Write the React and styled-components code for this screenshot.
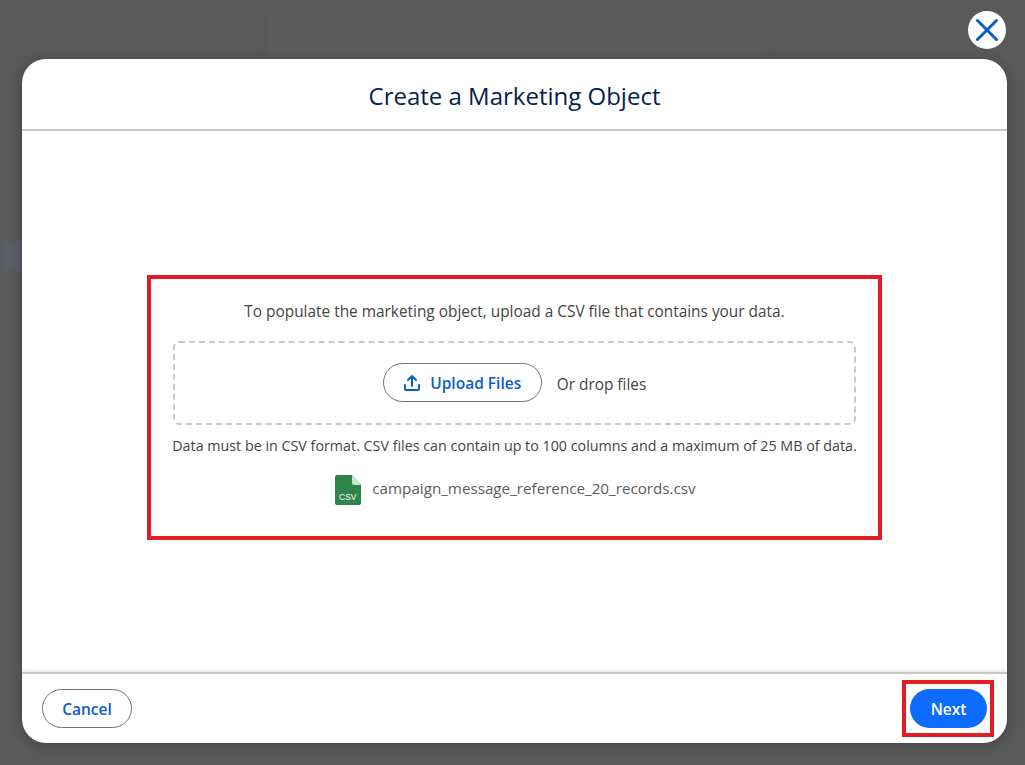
import styled, { createGlobalStyle } from "styled-components";

const GlobalStyle = createGlobalStyle`
  html, body {
    margin: 0;
    padding: 0;
    height: 100%;
    overflow: hidden;
    background: #595959;
    font-family: "Open Sans", "Noto Sans", sans-serif;
  }
`;

const Backdrop = styled.div`
  position: relative;
  width: 1025px;
  height: 765px;
  box-sizing: border-box;
  padding: 59px 18px 22px 22px;
  background: #595959;
`;

// faint traces of the page behind the overlay
const GhostSearch = styled.div`
  position: absolute;
  top: 16px;
  left: 268px;
  width: 500px;
  height: 44px;
  background: #5b5b5b;
  filter: blur(2px);
`;

const GhostNavItem = styled.div`
  position: absolute;
  top: 240px;
  left: 0;
  width: 22px;
  height: 32px;
  background: #5a5e66;
  filter: blur(2px);
`;

const CloseButton = styled.button`
  position: absolute;
  top: 11px;
  right: 19px;
  width: 38px;
  height: 38px;
  padding: 0;
  border: none;
  border-radius: 50%;
  background: #fff;
  display: flex;
  align-items: center;
  justify-content: center;
`;

const Modal = styled.div`
  position: relative;
  height: 100%;
  display: flex;
  flex-direction: column;
  background: #fff;
  border-radius: 24px;
  box-shadow: 0 2px 12px rgba(0, 0, 0, 0.25);
  overflow: hidden;
`;

const Header = styled.header`
  height: 72px;
  flex: none;
  box-sizing: border-box;
  padding-top: 2px;
  display: flex;
  align-items: center;
  justify-content: center;
  border-bottom: 2px solid #c9c9c9;
`;

const Title = styled.h1`
  margin: 0;
  font-size: 24px;
  font-weight: 400;
  color: #03234d;
`;

const Body = styled.main`
  flex: 1;
  display: flex;
  align-items: center;
  justify-content: center;
`;

const Highlight = styled.div`
  box-sizing: border-box;
  border: 4px solid #e31b23;
`;

const UploadPanel = styled(Highlight)`
  width: 735px;
  height: 265px;
  margin-top: 11px;
  padding: 23px 22px 0;
  display: flex;
  flex-direction: column;
  align-items: center;
`;

const Hint = styled.p`
  margin: 0;
  font-size: ${(p) => p.$size}px;
  line-height: 20px;
  color: #444;
  white-space: nowrap;
`;

const DropZone = styled.div`
  box-sizing: border-box;
  width: 683px;
  height: 84px;
  margin: 19px 0 11px;
  display: flex;
  align-items: center;
  justify-content: center;
  gap: 15px;
  border: 2px dashed #c9c9c9;
  border-radius: 6px;
`;

const PillButton = styled.button`
  box-sizing: border-box;
  height: 39px;
  border-radius: 20px;
  border: 1px solid #747474;
  background: #fff;
  color: #0b5cce;
  font: 600 15.5px "Open Sans", "Noto Sans", sans-serif;
  display: flex;
  align-items: center;
  justify-content: center;
  gap: 9px;
  padding: 0;
`;

const UploadButton = styled(PillButton)`
  width: 159px;
`;

const DropText = styled.span`
  margin-top: 3px;
  font-size: 15.4px;
  color: #444;
`;

const FileRow = styled.div`
  margin: 19px 0 0 2px;
  display: flex;
  align-items: center;
  gap: 11px;
`;

const FileName = styled.span`
  margin-bottom: 4px;
  font-size: 15.2px;
  color: #5c5c5c;
`;

const Footer = styled.footer`
  height: 71px;
  flex: none;
  box-sizing: border-box;
  padding: 6px 13px 6px 20px;
  display: flex;
  align-items: center;
  justify-content: space-between;
  border-top: 2px solid #c9c9c9;
  box-shadow: 0 -1px 4px rgba(0, 0, 0, 0.12);
`;

const CancelButton = styled(PillButton)`
  width: 90px;
`;

const NextBox = styled(Highlight)`
  padding: 5px 3px 5px 4px;
`;

const NextButton = styled(PillButton)`
  width: 77px;
  border: none;
  background: #0b6cff;
  color: #fff;
`;

function FileIcon() {
  return (
    <svg width="26" height="30" viewBox="0 0 26 30">
      <path d="M2 0H17L26 10V28a2 2 0 0 1-2 2H2a2 2 0 0 1-2-2V2a2 2 0 0 1 2-2Z" fill="#2e844a" />
      <path d="M17 0L26 10H19a2 2 0 0 1-2-2Z" fill="#c3e6c8" />
      <text x="4" y="25" fontSize="8.5" fill="#fff" fontFamily="Liberation Sans, sans-serif">CSV</text>
    </svg>
  );
}

export default function App() {
  return (
    <>
      <GlobalStyle />
      <Backdrop>
        <GhostSearch />
        <GhostNavItem />
        <CloseButton aria-label="Close">
          <svg width="24" height="24" viewBox="0 0 24 24" fill="none" stroke="#0b5cce" strokeWidth="3" strokeLinecap="round">
            <path d="M2.5 2.5L21.5 21.5M21.5 2.5L2.5 21.5" />
          </svg>
        </CloseButton>
        <Modal>
          <Header>
            <Title>Create a Marketing Object</Title>
          </Header>
          <Body>
            <UploadPanel>
              <Hint $size={15.4}>To populate the marketing object, upload a CSV file that contains your data.</Hint>
              <DropZone>
                <UploadButton>
                  <svg width="18" height="18" viewBox="0 0 18 18" fill="none" stroke="#0b5cce" strokeWidth="2" strokeLinecap="round" strokeLinejoin="round">
                    <path d="M9 12V2M5 6l4-4 4 4M2 11v4a1 1 0 0 0 1 1h12a1 1 0 0 0 1-1v-4" />
                  </svg>
                  Upload Files
                </UploadButton>
                <DropText>Or drop files</DropText>
              </DropZone>
              <Hint $size={14.3}>Data must be in CSV format. CSV files can contain up to 100 columns and a maximum of 25 MB of data.</Hint>
              <FileRow>
                <FileIcon />
                <FileName>campaign_message_reference_20_records.csv</FileName>
              </FileRow>
            </UploadPanel>
          </Body>
          <Footer>
            <CancelButton>Cancel</CancelButton>
            <NextBox>
              <NextButton>Next</NextButton>
            </NextBox>
          </Footer>
        </Modal>
      </Backdrop>
    </>
  );
}
